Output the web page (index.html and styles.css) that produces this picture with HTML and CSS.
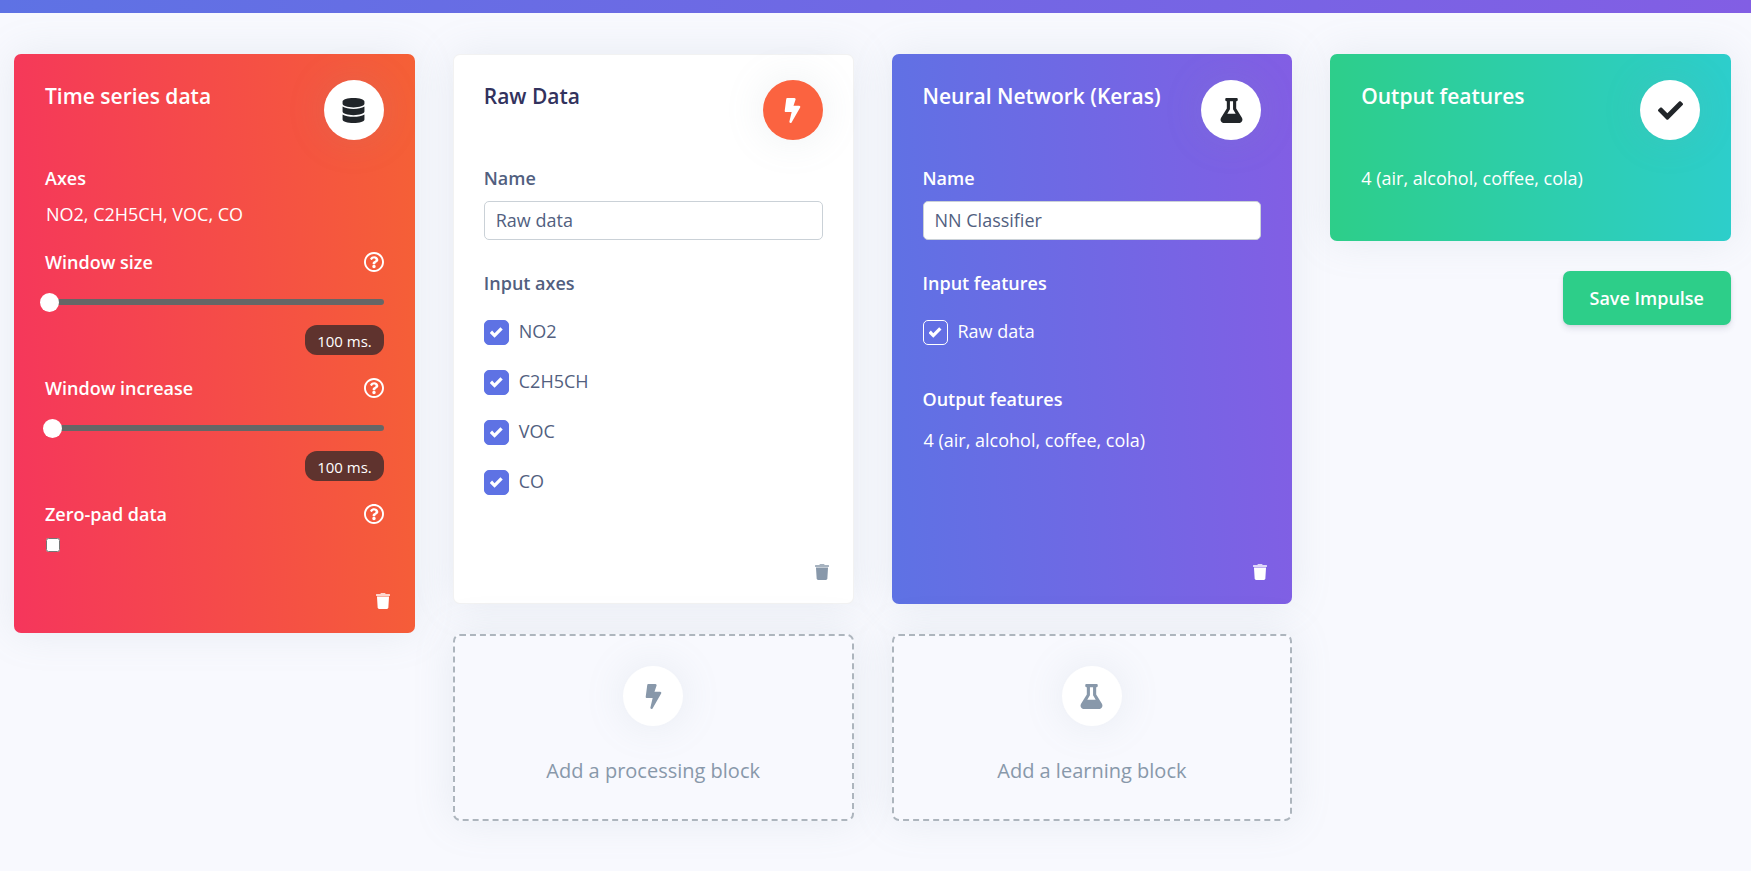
FILE: index.html
```html
<!DOCTYPE html>
<html lang="en">
<head>
    <meta charset="UTF-8">
    <meta name="viewport" content="width=device-width, initial-scale=1.0">
    <title>Create impulse</title>
    <link rel="stylesheet" href="styles.css">
</head>
<body>

    <!-- Shared icons -->
    <svg class="icon-defs" aria-hidden="true">
        <symbol id="icon-database" viewBox="0 0 448 512">
            <path d="M448 73.143v45.714C448 159.143 347.667 192 224 192S0 159.143 0 118.857V73.143C0 32.857 100.333 0 224 0s224 32.857 224 73.143zM448 176v102.857C448 319.143 347.667 352 224 352S0 319.143 0 278.857V176c48.125 33.143 136.208 48.572 224 48.572S399.874 209.143 448 176zm0 160v102.857C448 479.143 347.667 512 224 512S0 479.143 0 438.857V336c48.125 33.143 136.208 48.572 224 48.572S399.874 369.143 448 336z"/>
        </symbol>
        <symbol id="icon-bolt" viewBox="0 0 320 512">
            <path d="M296 160H180.6l42.6-129.8C227.2 15 215.7 0 200 0H56C44 0 33.8 8.9 32.2 20.8l-32 240C-1.7 275.2 9.5 288 24 288h118.7L96.6 482.5c-3.6 15.2 8 29.5 23.3 29.5 8.4 0 16.4-4.4 20.8-12l176-304c9.3-15.9-2.2-36-20.7-36z"/>
        </symbol>
        <symbol id="icon-flask" viewBox="0 0 448 512">
            <path d="M437.2 403.5L320 215V64h8c13.3 0 24-10.7 24-24V24c0-13.3-10.7-24-24-24H120c-13.3 0-24 10.7-24 24v16c0 13.3 10.7 24 24 24h8v151L10.8 403.5C-18.5 450.6 15.3 512 70.9 512h306.2c55.7 0 89.4-61.5 60.1-108.5zM137.9 320l48.2-77.6c3.7-5.2 5.8-11.6 5.8-18.4V64h64v160c0 6.9 2.2 13.2 5.8 18.4l48.2 77.6h-172z"/>
        </symbol>
        <symbol id="icon-check" viewBox="0 0 512 512">
            <path d="M173.898 439.404l-166.4-166.4c-9.997-9.997-9.997-26.206 0-36.204l36.203-36.204c9.997-9.998 26.207-9.998 36.204 0L192 312.69 432.095 72.596c9.997-9.997 26.207-9.997 36.204 0l36.203 36.204c9.997 9.997 9.997 26.206 0 36.204l-294.4 294.401c-9.998 9.997-26.207 9.997-36.204-.001z"/>
        </symbol>
        <symbol id="icon-help" viewBox="8 8 496 496">
            <path d="M256 8C119.043 8 8 119.083 8 256c0 136.997 111.043 248 248 248s248-111.003 248-248C504 119.083 392.957 8 256 8zm0 448c-110.532 0-200-89.431-200-200 0-110.495 89.472-200 200-200 110.491 0 200 89.471 200 200 0 110.53-89.431 200-200 200zm107.244-255.2c0 67.052-72.421 68.084-72.421 92.863V300c0 6.627-5.373 12-12 12h-45.647c-6.627 0-12-5.373-12-12v-8.659c0-35.745 27.1-50.034 47.579-61.516 17.561-9.845 28.324-16.541 28.324-29.579 0-17.246-21.999-28.693-39.784-28.693-23.189 0-33.894 10.977-48.942 29.969-4.057 5.12-11.46 6.071-16.666 2.124l-27.824-21.098c-5.107-3.872-6.251-11.066-2.644-16.363C184.846 131.491 214.94 112 261.794 112c49.071 0 101.45 38.304 101.45 88.8zM298 368c0 23.159-18.841 42-42 42s-42-18.841-42-42 18.841-42 42-42 42 18.841 42 42z"/>
        </symbol>
        <symbol id="icon-trash" viewBox="0 0 448 512">
            <path d="M432 32H312l-9.4-18.7A24 24 0 0 0 281.1 0H166.8a23.72 23.72 0 0 0-21.4 13.3L136 32H16A16 16 0 0 0 0 48v32a16 16 0 0 0 16 16h416a16 16 0 0 0 16-16V48a16 16 0 0 0-16-16z" opacity=".75"/>
            <path d="M53.2 467a48 48 0 0 0 47.9 45h245.8a48 48 0 0 0 47.9-45L416 112H32z"/>
        </symbol>
    </svg>

    <header class="top-bar"></header>

    <main class="impulse">

        <!-- Input block -->
        <section class="column">
            <div class="card card-input">
                <div class="card-head">
                    <h2>Time series data</h2>
                    <span class="circle"><svg><use href="#icon-database"/></svg></span>
                </div>
                <h3>Axes</h3>
                <p class="value">NO2, C2H5CH, VOC, CO</p>

                <div class="slider-field">
                    <div class="field-head">
                        <label for="window-size">Window size</label>
                        <button class="icon-button help" aria-label="About window size"><svg><use href="#icon-help"/></svg></button>
                    </div>
                    <input type="range" id="window-size" min="0" max="100" value="0">
                    <output class="badge" for="window-size">100 ms.</output>
                </div>

                <div class="slider-field">
                    <div class="field-head">
                        <label for="window-increase">Window increase</label>
                        <button class="icon-button help" aria-label="About window increase"><svg><use href="#icon-help"/></svg></button>
                    </div>
                    <input type="range" id="window-increase" min="0" max="100" value="1">
                    <output class="badge" for="window-increase">100 ms.</output>
                </div>

                <div class="field-head">
                    <label for="zero-pad">Zero-pad data</label>
                    <button class="icon-button help" aria-label="About zero-pad data"><svg><use href="#icon-help"/></svg></button>
                </div>
                <input type="checkbox" id="zero-pad" class="plain-check">

                <button class="icon-button trash" aria-label="Delete input block"><svg><use href="#icon-trash"/></svg></button>
            </div>
        </section>

        <!-- Processing block -->
        <section class="column">
            <div class="card card-processing">
                <div class="card-head">
                    <h2>Raw Data</h2>
                    <span class="circle"><svg><use href="#icon-bolt"/></svg></span>
                </div>
                <label for="dsp-name">Name</label>
                <input type="text" id="dsp-name" class="text-input" value="Raw data">

                <h3>Input axes</h3>
                <div class="check-list">
                    <label><input type="checkbox" checked>NO2</label>
                    <label><input type="checkbox" checked>C2H5CH</label>
                    <label><input type="checkbox" checked>VOC</label>
                    <label><input type="checkbox" checked>CO</label>
                </div>

                <button class="icon-button trash" aria-label="Delete processing block"><svg><use href="#icon-trash"/></svg></button>
            </div>

            <button class="add-block">
                <span class="circle"><svg><use href="#icon-bolt"/></svg></span>
                Add a processing block
            </button>
        </section>

        <!-- Learning block -->
        <section class="column">
            <div class="card card-learning">
                <div class="card-head">
                    <h2>Neural Network (Keras)</h2>
                    <span class="circle"><svg><use href="#icon-flask"/></svg></span>
                </div>
                <label for="nn-name">Name</label>
                <input type="text" id="nn-name" class="text-input" value="NN Classifier">

                <h3>Input features</h3>
                <div class="check-list">
                    <label><input type="checkbox" checked>Raw data</label>
                </div>

                <h3 class="output-title">Output features</h3>
                <p class="value">4 (air, alcohol, coffee, cola)</p>

                <button class="icon-button trash" aria-label="Delete learning block"><svg><use href="#icon-trash"/></svg></button>
            </div>

            <button class="add-block">
                <span class="circle"><svg><use href="#icon-flask"/></svg></span>
                Add a learning block
            </button>
        </section>

        <!-- Output -->
        <section class="column">
            <div class="card card-output">
                <div class="card-head">
                    <h2>Output features</h2>
                    <span class="circle"><svg><use href="#icon-check"/></svg></span>
                </div>
                <p>4 (air, alcohol, coffee, cola)</p>
            </div>
            <button class="save-button">Save Impulse</button>
        </section>

    </main>

</body>
</html>
```
FILE: styles.css
```css
* {
    box-sizing: border-box;
}

body {
    margin: 0;
    font-family: "Open Sans", sans-serif;
    font-size: 18px;
    line-height: 24px;
    color: #525f7f;
    background-color: #f8f9fe;
}

h2, h3, p {
    margin: 0;
}

button, input {
    font-family: inherit;
    font-size: inherit;
    line-height: inherit;
    color: inherit;
}

button {
    cursor: pointer;
}

svg {
    fill: currentColor;
}

.icon-defs {
    display: none;
}

.top-bar {
    height: 13px;
    background: linear-gradient(87deg, #5e72e4 0, #825ee4 100%);
}

/* Four columns of blocks */
.impulse {
    display: grid;
    grid-template-columns: repeat(4, 1fr);
    gap: 38px;
    padding: 41px 20px 50px 14px;
}

.column {
    display: flex;
    flex-direction: column;
    gap: 30px;
    min-width: 0;
}

/* Cards */
.card {
    display: flex;
    flex-direction: column;
    padding: 25px 30px 23px;
    border: 1px solid rgba(0, 0, 0, 0.05);
    border-radius: 7px;
    background-color: white;
    background-origin: border-box;
    box-shadow: 0 0 40px rgba(136, 152, 170, 0.15);
}

.card-input,
.card-learning,
.card-output {
    color: white;
    border-color: transparent;
}

.card-input {
    background-image: linear-gradient(87deg, #f5365c 0, #f56036 100%);
}

.card-processing,
.card-learning {
    min-height: 550px;
}

.card-learning {
    background-image: linear-gradient(87deg, #5e72e4 0, #825ee4 100%);
}

.card-output {
    min-height: 187px;
    background-image: linear-gradient(87deg, #2dce89 0, #2dcecc 100%);
}

.card-head {
    display: flex;
    justify-content: space-between;
    margin-bottom: 26px;
}

.card-head h2 {
    padding-top: 1px;
    font-size: 21px;
    line-height: 30px;
    font-weight: 600;
}

.card-processing h2 {
    color: #32325d;
}

.card h3,
.card label {
    font-size: 18px;
    font-weight: 600;
}

.value {
    margin-top: 12px;
    padding-left: 1px;
}

/* Round icons */
.circle {
    display: flex;
    flex: none;
    justify-content: center;
    align-items: center;
    width: 60px;
    height: 60px;
    border-radius: 50%;
    color: #212529;
    background-color: white;
    box-shadow: 0 0 40px rgba(136, 152, 170, 0.15);
}

.circle svg {
    width: 25px;
    height: 25px;
}

.card-processing .circle {
    color: white;
    background-color: #fb6340;
}

.icon-button {
    display: flex;
    padding: 0;
    border: none;
    background: none;
}

.help svg {
    width: 20px;
    height: 20px;
}

.trash {
    align-self: flex-end;
    margin-top: auto;
    margin-right: -6px;
}

.trash svg {
    width: 14px;
    height: 16px;
}

.card-processing .trash {
    color: #8898aa;
}

/* Sliders */
.field-head {
    display: flex;
    justify-content: space-between;
    align-items: center;
}

.slider-field {
    display: flex;
    flex-direction: column;
    margin-bottom: 21px;
}

.value + .slider-field {
    margin-top: 24px;
}

input[type="range"] {
    appearance: none;
    height: 19px;
    margin: 18px 0 14px -5px;
    background: none;
}

input[type="range"]::-webkit-slider-runnable-track {
    height: 6px;
    border-radius: 3px;
    background: linear-gradient(to right, transparent 8px, #666 8px);
}

input[type="range"]::-webkit-slider-thumb {
    appearance: none;
    width: 19px;
    height: 19px;
    margin-top: -6px;
    border-radius: 50%;
    background-color: white;
}

.badge {
    align-self: flex-end;
    padding: 4px 12px 2px;
    border-radius: 12px;
    font-size: 15px;
    color: white;
    background-color: #5f332e;
}

/* Inputs and checkboxes */
.plain-check {
    width: 14px;
    height: 14px;
    margin: 12px 0 41px 1px;
}

.text-input {
    width: 100%;
    height: 39px;
    margin: 11px 0 31px;
    padding: 0 11px 2px;
    border: 1px solid #cad1d7;
    border-radius: 5px;
    background-color: white;
    color: #525f7f;
}

.check-list {
    display: flex;
    flex-direction: column;
    gap: 25px;
    margin-top: 25px;
}

.card .check-list label {
    display: flex;
    gap: 10px;
    height: 25px;
    line-height: 22px;
    font-weight: 400;
}

.check-list input {
    display: flex;
    justify-content: center;
    align-items: center;
    appearance: none;
    width: 25px;
    height: 25px;
    margin: 0;
    border: 1px solid #5e72e4;
    border-radius: 5px;
    background-color: #5e72e4;
}

.check-list input:checked::before {
    content: "";
    width: 13px;
    height: 13px;
    background-color: white;
    clip-path: polygon(82% 9%, 37% 55%, 18% 35%, 0 53%, 37% 91%, 100% 27%);
}

.card-learning .check-list input {
    border-color: white;
    background-color: transparent;
}

.output-title {
    margin-top: 42px;
}

.output-title + .value {
    margin-top: 17px;
}

/* Add block */
.add-block {
    display: flex;
    flex-direction: column;
    align-items: center;
    gap: 30px;
    height: 187px;
    padding: 30px;
    border: 2px dashed #adb5bd;
    border-radius: 7px;
    font-size: 20px;
    line-height: 30px;
    color: #8898aa;
    background-color: #f8f9fe;
    box-shadow: 0 0 40px rgba(136, 152, 170, 0.15);
}

.add-block .circle {
    color: #8898aa;
}

/* Save button */
.save-button {
    align-self: flex-end;
    padding: 15px 27px;
    border: none;
    border-radius: 7px;
    font-weight: 600;
    color: white;
    background-color: #2dce89;
    box-shadow: 0 4px 6px rgba(50, 50, 93, 0.11), 0 1px 3px rgba(0, 0, 0, 0.08);
}
```
